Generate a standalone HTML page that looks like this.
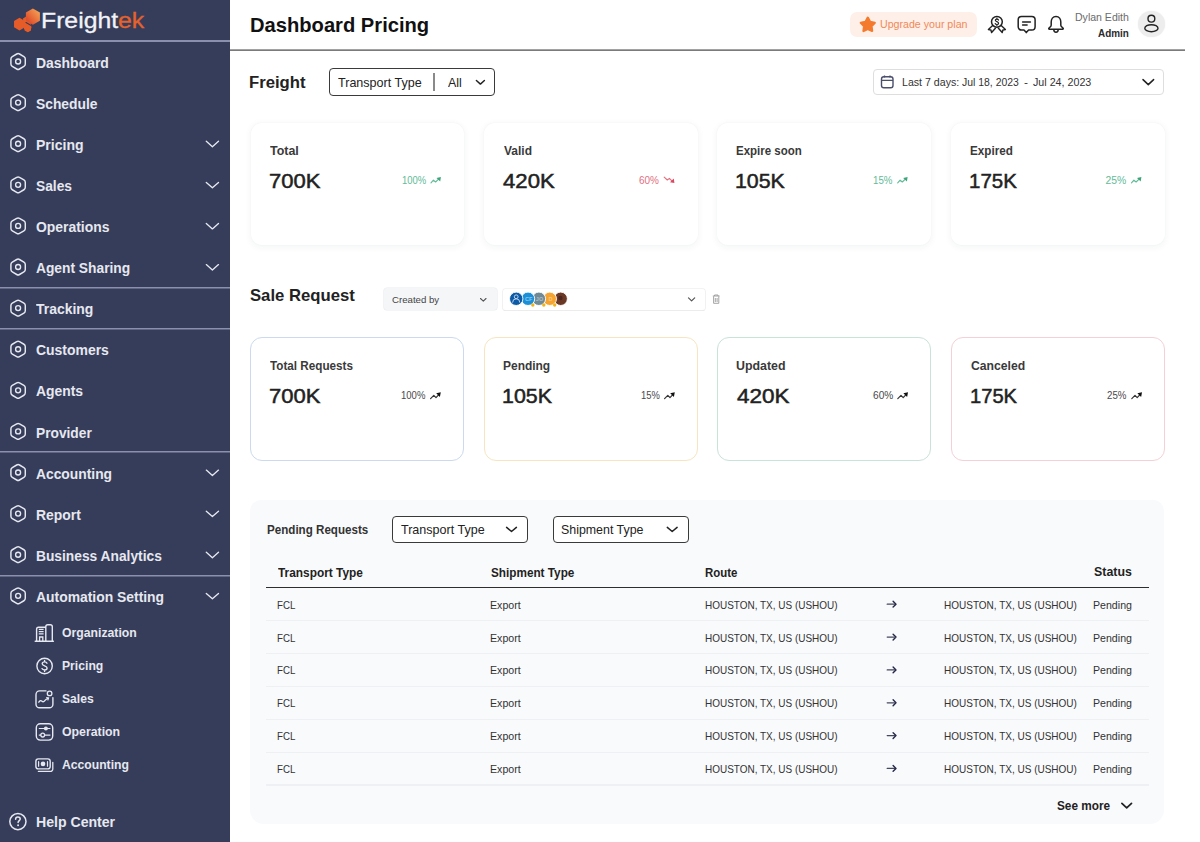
<!DOCTYPE html><html><head><meta charset="utf-8"><style>
html,body{margin:0;padding:0;width:1200px;height:842px;overflow:hidden;background:#fff;font-family:"Liberation Sans",sans-serif;}
.t{position:absolute;white-space:nowrap;line-height:1;}
svg{overflow:visible}
</style></head><body>
<div style="position:absolute;left:0px;top:0px;width:230px;height:842px;background:#363d5a"></div>
<svg style="position:absolute;left:0px;top:0px;" width="50" height="40" viewBox="0 0 50 40" fill="none"><defs><linearGradient id="lg" x1="0" y1="1" x2="1" y2="0"><stop offset="0.2" stop-color="#de4f2c"/><stop offset="0.95" stop-color="#f7a656"/></linearGradient></defs>
<path d="M19.50,30.40 L14.04,27.25 L14.04,20.95 L19.50,17.80 L24.96,20.95 L24.96,27.25 Z" fill="#e65c29"/>
<path d="M27.80,32.30 L24.60,30.45 L24.60,26.75 L27.80,24.90 L31.00,26.75 L31.00,30.45 Z" fill="#e65c29"/>
<path d="M23 18.5 L27 16 L31 24 L31.5 28 L28 32 L24 29 Z" fill="#e65c29"/>
<path d="M32.90,24.70 L25.89,20.65 L25.89,12.55 L32.90,8.50 L39.91,12.55 L39.91,20.65 Z" fill="url(#lg)"/>
<path d="M26 22.6 L31.2 25.6" stroke="#3b3a55" stroke-width="1.2" stroke-linecap="round"/></svg>
<div class="t" style="left:40.66px;top:10px;font-size:22.4px;color:#f2f3f7;transform:scaleX(1.1060);transform-origin:0 0;-webkit-text-stroke-width:0.3px">Freight<span style="color:#e5622c">ek</span></div>
<div style="position:absolute;left:0px;top:40px;width:230px;height:2px;background:#8a90ad"></div>
<div style="position:absolute;left:0px;top:287px;width:230px;height:1px;background:#8a90ad;box-shadow:0 1px 0 rgba(138,144,173,0.5)"></div>
<div style="position:absolute;left:0px;top:328px;width:230px;height:1px;background:#8a90ad;box-shadow:0 1px 0 rgba(138,144,173,0.5)"></div>
<div style="position:absolute;left:0px;top:451px;width:230px;height:1px;background:#8a90ad;box-shadow:0 1px 0 rgba(138,144,173,0.5)"></div>
<div style="position:absolute;left:0px;top:575px;width:230px;height:1px;background:#8a90ad;box-shadow:0 1px 0 rgba(138,144,173,0.5)"></div>
<div class="t" style="left:35.50px;top:56px;font-size:14px;color:#e6e8f0;font-weight:bold;transform:scaleX(0.9965);transform-origin:0 0;">Dashboard</div>
<div class="t" style="left:36.01px;top:97px;font-size:14px;color:#e6e8f0;font-weight:bold;transform:scaleX(0.9878);transform-origin:0 0;">Schedule</div>
<div class="t" style="left:35.50px;top:138px;font-size:14px;color:#e6e8f0;font-weight:bold;transform:scaleX(1.0022);transform-origin:0 0;">Pricing</div>
<div class="t" style="left:36.01px;top:179px;font-size:14px;color:#e6e8f0;font-weight:bold;transform:scaleX(0.9831);transform-origin:0 0;">Sales</div>
<div class="t" style="left:36.00px;top:220px;font-size:14px;color:#e6e8f0;font-weight:bold;transform:scaleX(0.9938);transform-origin:0 0;">Operations</div>
<div class="t" style="left:36.25px;top:261px;font-size:14px;color:#e6e8f0;font-weight:bold;transform:scaleX(0.9841);transform-origin:0 0;">Agent Sharing</div>
<div class="t" style="left:36.25px;top:302px;font-size:14px;color:#e6e8f0;font-weight:bold;transform:scaleX(0.9965);transform-origin:0 0;">Tracking</div>
<div class="t" style="left:36.00px;top:343px;font-size:14px;color:#e6e8f0;font-weight:bold;transform:scaleX(0.9958);transform-origin:0 0;">Customers</div>
<div class="t" style="left:36.25px;top:384px;font-size:14px;color:#e6e8f0;font-weight:bold;transform:scaleX(0.9925);transform-origin:0 0;">Agents</div>
<div class="t" style="left:35.52px;top:426px;font-size:14px;color:#e6e8f0;font-weight:bold;transform:scaleX(0.9812);transform-origin:0 0;">Provider</div>
<div class="t" style="left:36.25px;top:467px;font-size:14px;color:#e6e8f0;font-weight:bold;transform:scaleX(0.9875);transform-origin:0 0;">Accounting</div>
<div class="t" style="left:35.51px;top:508px;font-size:14px;color:#e6e8f0;font-weight:bold;transform:scaleX(0.9932);transform-origin:0 0;">Report</div>
<div class="t" style="left:35.52px;top:549px;font-size:14px;color:#e6e8f0;font-weight:bold;transform:scaleX(0.9838);transform-origin:0 0;">Business Analytics</div>
<div class="t" style="left:36.25px;top:590px;font-size:14px;color:#e6e8f0;font-weight:bold;transform:scaleX(0.9922);transform-origin:0 0;">Automation Setting</div>
<svg style="position:absolute;left:0px;top:0px;" width="230" height="842" viewBox="0 0 230 842" fill="none"><path d="M16.71 54.00 Q18.10 53.20 19.49 54.00 L23.90 56.55 Q25.29 57.35 25.29 58.95 L25.29 64.05 Q25.29 65.65 23.90 66.45 L19.49 69.00 Q18.10 69.80 16.71 69.00 L12.30 66.45 Q10.91 65.65 10.91 64.05 L10.91 58.95 Q10.91 57.35 12.30 56.55 Z" stroke="#e6e8f0" stroke-width="1.45"/><circle cx="18.1" cy="61.49999999999999" r="2.5" stroke="#e6e8f0" stroke-width="1.35"/><path d="M16.71 95.10 Q18.10 94.30 19.49 95.10 L23.90 97.65 Q25.29 98.45 25.29 100.05 L25.29 105.15 Q25.29 106.75 23.90 107.55 L19.49 110.10 Q18.10 110.90 16.71 110.10 L12.30 107.55 Q10.91 106.75 10.91 105.15 L10.91 100.05 Q10.91 98.45 12.30 97.65 Z" stroke="#e6e8f0" stroke-width="1.45"/><circle cx="18.1" cy="102.6" r="2.5" stroke="#e6e8f0" stroke-width="1.35"/><path d="M16.71 136.20 Q18.10 135.40 19.49 136.20 L23.90 138.75 Q25.29 139.55 25.29 141.15 L25.29 146.25 Q25.29 147.85 23.90 148.65 L19.49 151.20 Q18.10 152.00 16.71 151.20 L12.30 148.65 Q10.91 147.85 10.91 146.25 L10.91 141.15 Q10.91 139.55 12.30 138.75 Z" stroke="#e6e8f0" stroke-width="1.45"/><circle cx="18.1" cy="143.70000000000002" r="2.5" stroke="#e6e8f0" stroke-width="1.35"/><path d="M206.30 141.30 L212.40 146.70 L218.50 141.30" stroke="#e6e8f0" stroke-width="1.35" fill="none" stroke-linecap="round" stroke-linejoin="round"/><path d="M16.71 177.30 Q18.10 176.50 19.49 177.30 L23.90 179.85 Q25.29 180.65 25.29 182.25 L25.29 187.35 Q25.29 188.95 23.90 189.75 L19.49 192.30 Q18.10 193.10 16.71 192.30 L12.30 189.75 Q10.91 188.95 10.91 187.35 L10.91 182.25 Q10.91 180.65 12.30 179.85 Z" stroke="#e6e8f0" stroke-width="1.45"/><circle cx="18.1" cy="184.8" r="2.5" stroke="#e6e8f0" stroke-width="1.35"/><path d="M206.30 182.40 L212.40 187.80 L218.50 182.40" stroke="#e6e8f0" stroke-width="1.35" fill="none" stroke-linecap="round" stroke-linejoin="round"/><path d="M16.71 218.40 Q18.10 217.60 19.49 218.40 L23.90 220.95 Q25.29 221.75 25.29 223.35 L25.29 228.45 Q25.29 230.05 23.90 230.85 L19.49 233.40 Q18.10 234.20 16.71 233.40 L12.30 230.85 Q10.91 230.05 10.91 228.45 L10.91 223.35 Q10.91 221.75 12.30 220.95 Z" stroke="#e6e8f0" stroke-width="1.45"/><circle cx="18.1" cy="225.9" r="2.5" stroke="#e6e8f0" stroke-width="1.35"/><path d="M206.30 223.50 L212.40 228.90 L218.50 223.50" stroke="#e6e8f0" stroke-width="1.35" fill="none" stroke-linecap="round" stroke-linejoin="round"/><path d="M16.71 259.50 Q18.10 258.70 19.49 259.50 L23.90 262.05 Q25.29 262.85 25.29 264.45 L25.29 269.55 Q25.29 271.15 23.90 271.95 L19.49 274.50 Q18.10 275.30 16.71 274.50 L12.30 271.95 Q10.91 271.15 10.91 269.55 L10.91 264.45 Q10.91 262.85 12.30 262.05 Z" stroke="#e6e8f0" stroke-width="1.45"/><circle cx="18.1" cy="267.0" r="2.5" stroke="#e6e8f0" stroke-width="1.35"/><path d="M206.30 264.60 L212.40 270.00 L218.50 264.60" stroke="#e6e8f0" stroke-width="1.35" fill="none" stroke-linecap="round" stroke-linejoin="round"/><path d="M16.71 300.60 Q18.10 299.80 19.49 300.60 L23.90 303.15 Q25.29 303.95 25.29 305.55 L25.29 310.65 Q25.29 312.25 23.90 313.05 L19.49 315.60 Q18.10 316.40 16.71 315.60 L12.30 313.05 Q10.91 312.25 10.91 310.65 L10.91 305.55 Q10.91 303.95 12.30 303.15 Z" stroke="#e6e8f0" stroke-width="1.45"/><circle cx="18.1" cy="308.1" r="2.5" stroke="#e6e8f0" stroke-width="1.35"/><path d="M16.71 341.70 Q18.10 340.90 19.49 341.70 L23.90 344.25 Q25.29 345.05 25.29 346.65 L25.29 351.75 Q25.29 353.35 23.90 354.15 L19.49 356.70 Q18.10 357.50 16.71 356.70 L12.30 354.15 Q10.91 353.35 10.91 351.75 L10.91 346.65 Q10.91 345.05 12.30 344.25 Z" stroke="#e6e8f0" stroke-width="1.45"/><circle cx="18.1" cy="349.19999999999993" r="2.5" stroke="#e6e8f0" stroke-width="1.35"/><path d="M16.71 382.80 Q18.10 382.00 19.49 382.80 L23.90 385.35 Q25.29 386.15 25.29 387.75 L25.29 392.85 Q25.29 394.45 23.90 395.25 L19.49 397.80 Q18.10 398.60 16.71 397.80 L12.30 395.25 Q10.91 394.45 10.91 392.85 L10.91 387.75 Q10.91 386.15 12.30 385.35 Z" stroke="#e6e8f0" stroke-width="1.45"/><circle cx="18.1" cy="390.29999999999995" r="2.5" stroke="#e6e8f0" stroke-width="1.35"/><path d="M16.71 423.90 Q18.10 423.10 19.49 423.90 L23.90 426.45 Q25.29 427.25 25.29 428.85 L25.29 433.95 Q25.29 435.55 23.90 436.35 L19.49 438.90 Q18.10 439.70 16.71 438.90 L12.30 436.35 Q10.91 435.55 10.91 433.95 L10.91 428.85 Q10.91 427.25 12.30 426.45 Z" stroke="#e6e8f0" stroke-width="1.45"/><circle cx="18.1" cy="431.4" r="2.5" stroke="#e6e8f0" stroke-width="1.35"/><path d="M16.71 465.00 Q18.10 464.20 19.49 465.00 L23.90 467.55 Q25.29 468.35 25.29 469.95 L25.29 475.05 Q25.29 476.65 23.90 477.45 L19.49 480.00 Q18.10 480.80 16.71 480.00 L12.30 477.45 Q10.91 476.65 10.91 475.05 L10.91 469.95 Q10.91 468.35 12.30 467.55 Z" stroke="#e6e8f0" stroke-width="1.45"/><circle cx="18.1" cy="472.5" r="2.5" stroke="#e6e8f0" stroke-width="1.35"/><path d="M206.30 470.10 L212.40 475.50 L218.50 470.10" stroke="#e6e8f0" stroke-width="1.35" fill="none" stroke-linecap="round" stroke-linejoin="round"/><path d="M16.71 506.10 Q18.10 505.30 19.49 506.10 L23.90 508.65 Q25.29 509.45 25.29 511.05 L25.29 516.15 Q25.29 517.75 23.90 518.55 L19.49 521.10 Q18.10 521.90 16.71 521.10 L12.30 518.55 Q10.91 517.75 10.91 516.15 L10.91 511.05 Q10.91 509.45 12.30 508.65 Z" stroke="#e6e8f0" stroke-width="1.45"/><circle cx="18.1" cy="513.6" r="2.5" stroke="#e6e8f0" stroke-width="1.35"/><path d="M206.30 511.20 L212.40 516.60 L218.50 511.20" stroke="#e6e8f0" stroke-width="1.35" fill="none" stroke-linecap="round" stroke-linejoin="round"/><path d="M16.71 547.20 Q18.10 546.40 19.49 547.20 L23.90 549.75 Q25.29 550.55 25.29 552.15 L25.29 557.25 Q25.29 558.85 23.90 559.65 L19.49 562.20 Q18.10 563.00 16.71 562.20 L12.30 559.65 Q10.91 558.85 10.91 557.25 L10.91 552.15 Q10.91 550.55 12.30 549.75 Z" stroke="#e6e8f0" stroke-width="1.45"/><circle cx="18.1" cy="554.7" r="2.5" stroke="#e6e8f0" stroke-width="1.35"/><path d="M206.30 552.30 L212.40 557.70 L218.50 552.30" stroke="#e6e8f0" stroke-width="1.35" fill="none" stroke-linecap="round" stroke-linejoin="round"/><path d="M16.71 588.30 Q18.10 587.50 19.49 588.30 L23.90 590.85 Q25.29 591.65 25.29 593.25 L25.29 598.35 Q25.29 599.95 23.90 600.75 L19.49 603.30 Q18.10 604.10 16.71 603.30 L12.30 600.75 Q10.91 599.95 10.91 598.35 L10.91 593.25 Q10.91 591.65 12.30 590.85 Z" stroke="#e6e8f0" stroke-width="1.45"/><circle cx="18.1" cy="595.8000000000001" r="2.5" stroke="#e6e8f0" stroke-width="1.35"/><path d="M206.30 593.40 L212.40 598.80 L218.50 593.40" stroke="#e6e8f0" stroke-width="1.35" fill="none" stroke-linecap="round" stroke-linejoin="round"/></svg>
<div class="t" style="left:62.09px;top:627px;font-size:12px;color:#e6e8f0;font-weight:bold;transform:scaleX(1.0187);transform-origin:0 0;">Organization</div>
<div class="t" style="left:61.84px;top:660px;font-size:12px;color:#e6e8f0;font-weight:bold;transform:scaleX(1.0140);transform-origin:0 0;">Pricing</div>
<div class="t" style="left:62.10px;top:693px;font-size:12px;color:#e6e8f0;font-weight:bold;transform:scaleX(1.0098);transform-origin:0 0;">Sales</div>
<div class="t" style="left:62.09px;top:726px;font-size:12px;color:#e6e8f0;font-weight:bold;transform:scaleX(1.0252);transform-origin:0 0;">Operation</div>
<div class="t" style="left:62.35px;top:759px;font-size:12px;color:#e6e8f0;font-weight:bold;transform:scaleX(1.0138);transform-origin:0 0;">Accounting</div>
<svg style="position:absolute;left:0px;top:0px;" width="230" height="842" viewBox="0 0 230 842" fill="none"><path d="M36.6 641.3 V629.2 a2 2 0 0 1 2 -2 H45.8 V641.3 M45.8 627.2 V626.8 a2 2 0 0 1 2 -2 H50.3 a2 2 0 0 1 2 2 V641.3 M35.2 641.3 H53.4" stroke="#e6e8f0" stroke-width="1.4" stroke-linejoin="round" stroke-linecap="round"/><path d="M38.8 629.4 H43.6 M38.8 631.6 H43.6 M38.8 633.8 H43.6 M39.6 641 V637 H42.8 V641" stroke="#e6e8f0" stroke-width="1.3"/><circle cx="44.6" cy="666" r="7.7" stroke="#e6e8f0" stroke-width="1.4"/><path d="M47 663.2 C46.6 662.3 45.8 661.9 44.6 661.9 C43.1 661.9 42.2 662.7 42.2 663.8 C42.2 666.3 47.1 665.3 47.1 668 C47.1 669.2 46 670 44.6 670 C43.3 670 42.4 669.5 42 668.6 M44.6 660.5 V661.9 M44.6 670 V671.5" stroke="#e6e8f0" stroke-width="1.35" stroke-linecap="round"/><path d="M46 690.9 H39.6 a3.6 3.6 0 0 0 -3.6 3.6 V704.2 a3.6 3.6 0 0 0 3.6 3.6 H49.3 a3.6 3.6 0 0 0 3.6 -3.6 V697.6" stroke="#e6e8f0" stroke-width="1.4" stroke-linecap="round"/><circle cx="49.6" cy="693.4" r="2.3" stroke="#e6e8f0" stroke-width="1.3"/><path d="M38.8 702.2 C40 700.4 41 700.2 42 701.2 C43 702.2 44 701.8 45 700.4 C45.8 699.3 46.6 698.8 48.2 698.3" stroke="#e6e8f0" stroke-width="1.3" stroke-linecap="round"/><path d="M46.6 697.6 L48.6 698 L47.9 700" stroke="#e6e8f0" stroke-width="1.1" stroke-linecap="round"/><rect x="36.3" y="723.7" width="16.4" height="16.4" rx="4" stroke="#e6e8f0" stroke-width="1.4"/><path d="M38.8 728.5 H50.4 M38.8 735.1 H50.4" stroke="#e6e8f0" stroke-width="1.2"/><circle cx="45.9" cy="728.5" r="2" fill="#e6e8f0"/><circle cx="42.7" cy="735.1" r="1.9" fill="#363d5a" stroke="#e6e8f0" stroke-width="1.3"/><path d="M38.4 771.4 H50.3 a2.5 2.5 0 0 0 2.5 -2.5 V762.3" stroke="#e6e8f0" stroke-width="1.3" stroke-linecap="round"/><rect x="35.9" y="758.9" width="14.3" height="10" rx="2.4" stroke="#e6e8f0" stroke-width="1.4"/><circle cx="43" cy="763.9" r="2.3" fill="#e6e8f0"/><path d="M38.6 761.7 V766.2 M47.5 761.7 V766.2" stroke="#e6e8f0" stroke-width="1.2" stroke-linecap="round"/></svg>
<div class="t" style="left:35.99px;top:815px;font-size:14px;color:#e6e8f0;font-weight:bold;transform:scaleX(1.0065);transform-origin:0 0;">Help Center</div>
<svg style="position:absolute;left:0px;top:0px;" width="40" height="842" viewBox="0 0 40 842" fill="none"><circle cx="17.9" cy="821.6" r="8.1" stroke="#e6e8f0" stroke-width="1.5"/><path d="M15.6 819.3 C15.6 817.9 16.6 817.1 17.9 817.1 C19.2 817.1 20.2 817.9 20.2 819.1 C20.2 820.6 18.1 820.8 18.1 822.6" stroke="#e6e8f0" stroke-width="1.5" stroke-linecap="round"/><circle cx="18.1" cy="825.2" r="0.95" fill="#e6e8f0"/></svg>
<div class="t" style="left:249.57px;top:15px;font-size:20.5px;color:#111;font-weight:bold;transform:scaleX(0.9830);transform-origin:0 0;">Dashboard Pricing</div>
<div style="position:absolute;left:230px;top:49px;width:955px;height:1px;background:#a2a2a2;box-shadow:0 1px 0 #7b7b7b"></div>
<div style="position:absolute;left:850px;top:12.3px;width:127.3px;height:24.7px;background:#fef0e8;border-radius:7px"></div>
<svg style="position:absolute;left:0px;top:0px;" width="1200" height="60" viewBox="0 0 1200 60" fill="none"><path d="M867.80,17.60 L870.09,21.84 L874.84,22.71 L871.51,26.21 L872.15,30.99 L867.80,28.90 L863.45,30.99 L864.09,26.21 L860.76,22.71 L865.51,21.84 Z" fill="#f47a2d" stroke="#f47a2d" stroke-width="2.2" stroke-linejoin="round"/></svg>
<div class="t" style="left:879.99px;top:19px;font-size:11.2px;color:#f0895a;transform:scaleX(0.9503);transform-origin:0 0;">Upgrade your plan</div>
<svg style="position:absolute;left:0px;top:0px;" width="1200" height="60" viewBox="0 0 1200 60" fill="none"><circle cx="996.9" cy="21.8" r="5.4" stroke="#222" stroke-width="1.5"/><path d="M998.5 20.1 C998.2 19.4 997.7 19.1 996.9 19.1 C995.9 19.1 995.3 19.6 995.3 20.3 C995.3 21.9 998.6 21.4 998.6 23.2 C998.6 24 997.9 24.5 996.9 24.5 C996 24.5 995.4 24.1 995.2 23.5 M996.9 18.1 V19.1 M996.9 24.5 V25.4" stroke="#222" stroke-width="1.15" stroke-linecap="round"/><path d="M992.6 25.6 L988.4 29.5 L990.9 30 L991.6 32.5 L995.4 28.3 M1001.2 25.6 L1005.4 29.5 L1002.9 30 L1002.2 32.5 L998.4 28.3" stroke="#222" stroke-width="1.4" stroke-linejoin="round" stroke-linecap="round"/><path d="M1021.5 16.5 H1031.8 a3.3 3.3 0 0 1 3.3 3.3 V26.8 a3.3 3.3 0 0 1 -3.3 3.3 H1028.6 L1026.3 32.6 L1024 30.1 H1021.5 a3.3 3.3 0 0 1 -3.3 -3.3 V19.8 a3.3 3.3 0 0 1 3.3 -3.3 Z" stroke="#222" stroke-width="1.5" stroke-linejoin="round"/><path d="M1022.6 22.1 H1030.4 M1022.6 25 H1027.1" stroke="#222" stroke-width="1.5" stroke-linecap="round"/><path d="M1056 16.5 C1052.8 16.5 1051.2 19.2 1051.2 22 V25.3 C1051.2 26.8 1049.8 27.4 1049 28 C1048.5 28.5 1048.7 29.2 1049.4 29.2 H1062.6 C1063.3 29.2 1063.5 28.5 1063 28 C1062.2 27.4 1060.8 26.8 1060.8 25.3 V22 C1060.8 19.2 1059.2 16.5 1056 16.5 Z" stroke="#222" stroke-width="1.5" stroke-linejoin="round"/><path d="M1053.8 29.6 a2.2 2.6 0 0 0 4.4 0" stroke="#222" stroke-width="1.5"/></svg>
<div class="t" style="left:1074.84px;top:12px;font-size:11px;color:#6b6b6b;transform:scaleX(0.9578);transform-origin:0 0;">Dylan Edith</div>
<div class="t" style="left:1097.77px;top:28px;font-size:10.8px;color:#2b2b2b;font-weight:bold;transform:scaleX(0.9160);transform-origin:0 0;">Admin</div>
<div style="position:absolute;left:1138.2px;top:11px;width:26.4px;height:26.4px;background:#ededed;border-radius:50%;box-shadow:0 0 1.5px #ededed"></div>
<svg style="position:absolute;left:0px;top:0px;" width="1200" height="60" viewBox="0 0 1200 60" fill="none"><circle cx="1151.4" cy="18.7" r="3.4" stroke="#222" stroke-width="1.4"/><ellipse cx="1151.4" cy="28.2" rx="6.6" ry="3.5" stroke="#222" stroke-width="1.4"/></svg>
<div class="t" style="left:249.43px;top:74px;font-size:17.2px;color:#222;font-weight:bold;transform:scaleX(0.9702);transform-origin:0 0;">Freight</div>
<div style="position:absolute;left:329px;top:68px;width:164px;height:26px;border:1px solid #3a3a3a;border-radius:4px;box-sizing:content-box"></div>
<div class="t" style="left:337.95px;top:77px;font-size:12.4px;color:#222;transform:scaleX(1.0128);transform-origin:0 0;">Transport Type</div>
<div style="position:absolute;left:433.4px;top:73.2px;width:1.5px;height:18px;background:#8a8a8a"></div>
<div class="t" style="left:447.60px;top:77px;font-size:12.2px;color:#222;transform:scaleX(1.0196);transform-origin:0 0;">All</div>
<svg style="position:absolute;left:0px;top:0px;" width="1200" height="120" viewBox="0 0 1200 120" fill="none"><path d="M476.4 80.5 L480.4 84.1 L484.4 80.5" stroke="#222" stroke-width="1.45" stroke-linecap="round" stroke-linejoin="round"/></svg>
<div style="position:absolute;left:873px;top:69px;width:289px;height:24px;border:1px solid #dedede;border-radius:4px;box-sizing:content-box"></div>
<svg style="position:absolute;left:0px;top:0px;" width="1200" height="120" viewBox="0 0 1200 120" fill="none"><rect x="881.5" y="76.7" width="11.5" height="11" rx="2.3" stroke="#4a4f6c" stroke-width="1.4"/><path d="M881.5 80.3 H893 M884.5 75.5 V77.5 M890 75.5 V77.5" stroke="#4a4f6c" stroke-width="1.3"/><path d="M1143 79.6 L1148.3 84.6 L1153.6 79.6" stroke="#222" stroke-width="1.5" stroke-linecap="round" stroke-linejoin="round"/></svg>
<div class="t" style="left:901.97px;top:77px;font-size:10.9px;color:#333;transform:scaleX(0.9737);transform-origin:0 0;">Last 7 days:</div>
<div class="t" style="left:962.26px;top:77px;font-size:10.9px;color:#333;transform:scaleX(0.9583);transform-origin:0 0;">Jul 18, 2023</div>
<div class="t" style="left:1024.05px;top:77px;font-size:10.9px;color:#333;transform:scaleX(1.0909);transform-origin:0 0;">-</div>
<div class="t" style="left:1033.15px;top:77px;font-size:10.9px;color:#333;transform:scaleX(0.9821);transform-origin:0 0;">Jul 24, 2023</div>
<div style="position:absolute;left:250.5px;top:123px;width:213.5px;height:121.5px;background:#fff;border-radius:11px;box-shadow:0 1.5px 6px 1px rgba(30,40,70,0.045),0 0 2px rgba(30,40,70,0.04)"></div>
<div style="position:absolute;left:484px;top:123px;width:213.5px;height:121.5px;background:#fff;border-radius:11px;box-shadow:0 1.5px 6px 1px rgba(30,40,70,0.045),0 0 2px rgba(30,40,70,0.04)"></div>
<div style="position:absolute;left:717.2px;top:123px;width:213.5px;height:121.5px;background:#fff;border-radius:11px;box-shadow:0 1.5px 6px 1px rgba(30,40,70,0.045),0 0 2px rgba(30,40,70,0.04)"></div>
<div style="position:absolute;left:951px;top:123px;width:213.5px;height:121.5px;background:#fff;border-radius:11px;box-shadow:0 1.5px 6px 1px rgba(30,40,70,0.045),0 0 2px rgba(30,40,70,0.04)"></div>
<div class="t" style="left:270.10px;top:145px;font-size:12px;color:#3a3a3a;font-weight:bold;transform:scaleX(1.0370);transform-origin:0 0;">Total</div>
<div class="t" style="left:269.03px;top:171px;font-size:20.6px;color:#222;transform:scaleX(1.0695);transform-origin:0 0;-webkit-text-stroke:0.5px #222">700K</div>
<div class="t" style="left:401.62px;top:176px;font-size:10.4px;color:#62bb98;transform:scaleX(0.9098);transform-origin:0 0;">100%</div>
<div class="t" style="left:503.60px;top:145px;font-size:12px;color:#3a3a3a;font-weight:bold;transform:scaleX(0.9982);transform-origin:0 0;">Valid</div>
<div class="t" style="left:503.06px;top:171px;font-size:20.6px;color:#222;transform:scaleX(1.0751);transform-origin:0 0;-webkit-text-stroke:0.5px #222">420K</div>
<div class="t" style="left:639.32px;top:176px;font-size:10.4px;color:#e2707f;transform:scaleX(0.9600);transform-origin:0 0;">60%</div>
<div class="t" style="left:736.08px;top:145px;font-size:12px;color:#3a3a3a;font-weight:bold;transform:scaleX(0.9576);transform-origin:0 0;">Expire soon</div>
<div class="t" style="left:735.25px;top:171px;font-size:20.6px;color:#222;transform:scaleX(1.0357);transform-origin:0 0;-webkit-text-stroke:0.5px #222">105K</div>
<div class="t" style="left:873.10px;top:176px;font-size:10.4px;color:#62bb98;transform:scaleX(0.9316);transform-origin:0 0;">15%</div>
<div class="t" style="left:969.87px;top:145px;font-size:12px;color:#3a3a3a;font-weight:bold;transform:scaleX(0.9741);transform-origin:0 0;">Expired</div>
<div class="t" style="left:969.11px;top:171px;font-size:20.6px;color:#222;transform:scaleX(0.9946);transform-origin:0 0;-webkit-text-stroke:0.5px #222">175K</div>
<div class="t" style="left:1105.50px;top:176px;font-size:10.4px;color:#62bb98;transform:scaleX(1.0000);transform-origin:0 0;">25%</div>
<svg style="position:absolute;left:0px;top:0px;" width="1200" height="260" viewBox="0 0 1200 260" fill="none"><path d="M431.0 182.8 L433.4 180.2 L435.6 182 L438.6 179.2" stroke="#62bb98" stroke-width="1.15" stroke-linecap="round" stroke-linejoin="round"/><path d="M440.9 177.1 L436.5 177.9 L440.2 181.5 Z" fill="#3ba57a"/><path d="M664.2 177.1 L667.3 180 L669.4 178.4 L671.9 180.8" stroke="#e2707f" stroke-width="1.15" stroke-linecap="round" stroke-linejoin="round"/><path d="M674.4 182.9 L670.0 182.3 L673.8 178.6 Z" fill="#d84a63"/><path d="M897.7 182.8 L900.1 180.2 L902.3000000000001 182 L905.3000000000001 179.2" stroke="#62bb98" stroke-width="1.15" stroke-linecap="round" stroke-linejoin="round"/><path d="M907.6 177.1 L903.2 177.9 L906.9000000000001 181.5 Z" fill="#3ba57a"/><path d="M1131.5 182.8 L1133.9 180.2 L1136.1 182 L1139.1 179.2" stroke="#62bb98" stroke-width="1.15" stroke-linecap="round" stroke-linejoin="round"/><path d="M1141.4 177.1 L1137.0 177.9 L1140.7 181.5 Z" fill="#3ba57a"/></svg>
<div class="t" style="left:249.91px;top:287px;font-size:17px;color:#222;font-weight:bold;transform:scaleX(0.9811);transform-origin:0 0;">Sale Request</div>
<div style="position:absolute;left:383.5px;top:288.4px;width:113.9px;height:21.2px;background:#f5f6f8;box-shadow:0 0 0 0.6px #e9ebee;border-radius:3px"></div>
<div class="t" style="left:391.80px;top:295px;font-size:9.6px;color:#444;transform:scaleX(1.0043);transform-origin:0 0;">Created by</div>
<div style="position:absolute;left:503px;top:289.4px;width:202px;height:20.2px;background:#fff;box-shadow:0 0 0 0.7px #efefef, 0 0.6px 0 0.4px #e0e0e0;border-radius:2.5px"></div>
<svg style="position:absolute;left:0px;top:0px;" width="1200" height="320" viewBox="0 0 1200 320" fill="none"><path d="M480.5 298.5 L483.3 301.2 L486 298.5" stroke="#555" stroke-width="1.1" stroke-linecap="round" stroke-linejoin="round"/><path d="M688.5 297.8 L691.6 300.9 L694.7 297.8" stroke="#555" stroke-width="1.2" stroke-linecap="round" stroke-linejoin="round"/><circle cx="560.7" cy="298.8" r="6.7" fill="#6b3826" stroke="#fff" stroke-width="0.9"/><circle cx="549.8" cy="298.8" r="6.7" fill="#f5a431" stroke="#fff" stroke-width="0.9"/><circle cx="538.9" cy="298.8" r="6.7" fill="#6f8995" stroke="#fff" stroke-width="0.9"/><circle cx="528" cy="298.8" r="6.7" fill="#1b8fd7" stroke="#fff" stroke-width="0.9"/><circle cx="516.2" cy="298.8" r="6.7" fill="#0d5aa6" stroke="#fff" stroke-width="0.9"/><circle cx="560.4" cy="298" r="2.2" fill="#3e1f18" opacity="0.7"/><text x="528.6" y="301" font-family="Liberation Sans" font-size="5.5" font-weight="bold" fill="#d6ecfa" opacity="0.6" text-anchor="middle">CF</text><text x="539.5" y="301" font-family="Liberation Sans" font-size="5.5" font-weight="bold" fill="#d8e0e4" opacity="0.6" text-anchor="middle">JO</text><text x="550.4" y="301" font-family="Liberation Sans" font-size="5.5" font-weight="bold" fill="#fde3b5" opacity="0.6" text-anchor="middle">D</text><circle cx="516.2" cy="296.8" r="1.9" stroke="#cfe0f2" stroke-width="0.9"/><path d="M512.6 302.6 a3.6 3.8 0 0 1 7.2 0" stroke="#cfe0f2" stroke-width="0.9"/><circle cx="532.8" cy="305" r="1.7" fill="#f0b318"/><circle cx="543.8" cy="305" r="1.7" fill="#f0b318"/><circle cx="554.7" cy="305" r="1.7" fill="#f0b318"/><path d="M712.8 296 H719.6 M714.5 296 V295 H718 V296 M713.6 296.3 V303.3 H718.8 V296.3 M715.3 298 V302 M717.1 298 V302" stroke="#9a9a9a" stroke-width="0.9"/></svg>
<div style="position:absolute;left:250px;top:337px;width:211.6px;height:121.5px;border:1px solid #cbdaee;border-radius:12px;box-sizing:content-box;background:#fff"></div>
<div class="t" style="left:270.00px;top:360px;font-size:12px;color:#3a3a3a;font-weight:bold;transform:scaleX(0.9746);transform-origin:0 0;">Total Requests</div>
<div class="t" style="left:268.93px;top:386px;font-size:20.6px;color:#222;transform:scaleX(1.0695);transform-origin:0 0;-webkit-text-stroke:0.5px #222">700K</div>
<div class="t" style="left:401.43px;top:390px;font-size:10.6px;color:#4a4a4a;transform:scaleX(0.9000);transform-origin:0 0;">100%</div>
<div style="position:absolute;left:484px;top:337px;width:211.6px;height:121.5px;border:1px solid #f7e5c0;border-radius:12px;box-sizing:content-box;background:#fff"></div>
<div class="t" style="left:503.25px;top:360px;font-size:12px;color:#3a3a3a;font-weight:bold;transform:scaleX(0.9967);transform-origin:0 0;">Pending</div>
<div class="t" style="left:502.44px;top:386px;font-size:20.6px;color:#222;transform:scaleX(1.0378);transform-origin:0 0;-webkit-text-stroke:0.5px #222">105K</div>
<div class="t" style="left:640.83px;top:390px;font-size:10.6px;color:#4a4a4a;transform:scaleX(0.8889);transform-origin:0 0;">15%</div>
<div style="position:absolute;left:717.2px;top:337px;width:211.6px;height:121.5px;border:1px solid #c8e3d7;border-radius:12px;box-sizing:content-box;background:#fff"></div>
<div class="t" style="left:736.43px;top:360px;font-size:12px;color:#3a3a3a;font-weight:bold;transform:scaleX(1.0323);transform-origin:0 0;">Updated</div>
<div class="t" style="left:736.65px;top:386px;font-size:20.6px;color:#222;transform:scaleX(1.0921);transform-origin:0 0;-webkit-text-stroke:0.5px #222">420K</div>
<div class="t" style="left:872.62px;top:390px;font-size:10.6px;color:#4a4a4a;transform:scaleX(0.9561);transform-origin:0 0;">60%</div>
<div style="position:absolute;left:951.2px;top:337px;width:211.6px;height:121.5px;border:1px solid #f5d0d6;border-radius:12px;box-sizing:content-box;background:#fff"></div>
<div class="t" style="left:970.69px;top:360px;font-size:12px;color:#3a3a3a;font-weight:bold;transform:scaleX(1.0154);transform-origin:0 0;">Canceled</div>
<div class="t" style="left:969.73px;top:386px;font-size:20.6px;color:#222;transform:scaleX(0.9773);transform-origin:0 0;-webkit-text-stroke:0.5px #222">175K</div>
<div class="t" style="left:1107.44px;top:390px;font-size:10.6px;color:#4a4a4a;transform:scaleX(0.9171);transform-origin:0 0;">25%</div>
<svg style="position:absolute;left:0px;top:0px;" width="1200" height="480" viewBox="0 0 1200 480" fill="none"><path d="M430.6 398.6 L433.8 395.4 L436.0 397.6 L438.8 394.6" stroke="#333" stroke-width="1.2" stroke-linecap="round" stroke-linejoin="round"/><path d="M440.8 392.2 L436.20000000000005 393.2 L439.90000000000003 396.9 Z" fill="#111"/><path d="M664.6 398.6 L667.8000000000001 395.4 L670.0 397.6 L672.8000000000001 394.6" stroke="#333" stroke-width="1.2" stroke-linecap="round" stroke-linejoin="round"/><path d="M674.8000000000001 392.2 L670.2 393.2 L673.9 396.9 Z" fill="#111"/><path d="M897.8000000000001 398.6 L901.0000000000001 395.4 L903.2 397.6 L906.0000000000001 394.6" stroke="#333" stroke-width="1.2" stroke-linecap="round" stroke-linejoin="round"/><path d="M908.0000000000001 392.2 L903.4000000000001 393.2 L907.1 396.9 Z" fill="#111"/><path d="M1131.8 398.6 L1135.0 395.4 L1137.2 397.6 L1140.0 394.6" stroke="#333" stroke-width="1.2" stroke-linecap="round" stroke-linejoin="round"/><path d="M1142.0 392.2 L1137.3999999999999 393.2 L1141.1 396.9 Z" fill="#111"/></svg>
<div style="position:absolute;left:250.3px;top:500px;width:913.7px;height:324px;background:#f9fafc;border-radius:11px 11px 14px 14px"></div>
<div class="t" style="left:266.59px;top:524px;font-size:12.2px;color:#333;font-weight:bold;transform:scaleX(0.9524);transform-origin:0 0;">Pending Requests</div>
<div style="position:absolute;left:392.2px;top:515.8px;width:134px;height:25.2px;background:#fff;border:1px solid #3a3a3a;border-radius:4px;box-sizing:content-box"></div>
<div style="position:absolute;left:553px;top:515.8px;width:134px;height:25.2px;background:#fff;border:1px solid #3a3a3a;border-radius:4px;box-sizing:content-box"></div>
<div class="t" style="left:401.25px;top:524px;font-size:12.4px;color:#222;transform:scaleX(1.0116);transform-origin:0 0;">Transport Type</div>
<div class="t" style="left:561.00px;top:524px;font-size:12.4px;color:#222;transform:scaleX(1.0000);transform-origin:0 0;">Shipment Type</div>
<div class="t" style="left:277.80px;top:567px;font-size:12.6px;color:#222;font-weight:bold;transform:scaleX(0.9426);transform-origin:0 0;">Transport Type</div>
<div class="t" style="left:490.97px;top:567px;font-size:12.6px;color:#222;font-weight:bold;transform:scaleX(0.9330);transform-origin:0 0;">Shipment Type</div>
<div class="t" style="left:704.72px;top:567px;font-size:12.6px;color:#222;font-weight:bold;transform:scaleX(0.9072);transform-origin:0 0;">Route</div>
<div class="t" style="left:1093.75px;top:566px;font-size:12.6px;color:#222;font-weight:bold;transform:scaleX(0.9828);transform-origin:0 0;">Status</div>
<div style="position:absolute;left:266px;top:587px;width:882.5px;height:1.3px;background:#2e2e2e"></div>
<div class="t" style="left:277.13px;top:600px;font-size:10.9px;color:#333;transform:scaleX(0.8923);transform-origin:0 0;">FCL</div>
<div class="t" style="left:490.47px;top:600px;font-size:10.9px;color:#333;transform:scaleX(0.9756);transform-origin:0 0;">Export</div>
<div class="t" style="left:704.71px;top:600px;font-size:10.9px;color:#333;transform:scaleX(0.9150);transform-origin:0 0;">HOUSTON, TX, US (USHOU)</div>
<div class="t" style="left:944.31px;top:600px;font-size:10.9px;color:#333;transform:scaleX(0.9178);transform-origin:0 0;">HOUSTON, TX, US (USHOU)</div>
<div class="t" style="left:1093.27px;top:600px;font-size:10.9px;color:#333;transform:scaleX(0.9740);transform-origin:0 0;">Pending</div>
<div style="position:absolute;left:266px;top:620.1px;width:882.5px;height:1.2px;background:#eff0f3"></div>
<div class="t" style="left:277.13px;top:633px;font-size:10.9px;color:#333;transform:scaleX(0.8923);transform-origin:0 0;">FCL</div>
<div class="t" style="left:490.47px;top:633px;font-size:10.9px;color:#333;transform:scaleX(0.9756);transform-origin:0 0;">Export</div>
<div class="t" style="left:704.71px;top:633px;font-size:10.9px;color:#333;transform:scaleX(0.9150);transform-origin:0 0;">HOUSTON, TX, US (USHOU)</div>
<div class="t" style="left:944.31px;top:633px;font-size:10.9px;color:#333;transform:scaleX(0.9178);transform-origin:0 0;">HOUSTON, TX, US (USHOU)</div>
<div class="t" style="left:1093.27px;top:633px;font-size:10.9px;color:#333;transform:scaleX(0.9740);transform-origin:0 0;">Pending</div>
<div style="position:absolute;left:266px;top:652.95px;width:882.5px;height:1.2px;background:#eff0f3"></div>
<div class="t" style="left:277.13px;top:665px;font-size:10.9px;color:#333;transform:scaleX(0.8923);transform-origin:0 0;">FCL</div>
<div class="t" style="left:490.47px;top:665px;font-size:10.9px;color:#333;transform:scaleX(0.9756);transform-origin:0 0;">Export</div>
<div class="t" style="left:704.71px;top:665px;font-size:10.9px;color:#333;transform:scaleX(0.9150);transform-origin:0 0;">HOUSTON, TX, US (USHOU)</div>
<div class="t" style="left:944.31px;top:665px;font-size:10.9px;color:#333;transform:scaleX(0.9178);transform-origin:0 0;">HOUSTON, TX, US (USHOU)</div>
<div class="t" style="left:1093.27px;top:665px;font-size:10.9px;color:#333;transform:scaleX(0.9740);transform-origin:0 0;">Pending</div>
<div style="position:absolute;left:266px;top:685.8000000000001px;width:882.5px;height:1.2px;background:#eff0f3"></div>
<div class="t" style="left:277.13px;top:698px;font-size:10.9px;color:#333;transform:scaleX(0.8923);transform-origin:0 0;">FCL</div>
<div class="t" style="left:490.47px;top:698px;font-size:10.9px;color:#333;transform:scaleX(0.9756);transform-origin:0 0;">Export</div>
<div class="t" style="left:704.71px;top:698px;font-size:10.9px;color:#333;transform:scaleX(0.9150);transform-origin:0 0;">HOUSTON, TX, US (USHOU)</div>
<div class="t" style="left:944.31px;top:698px;font-size:10.9px;color:#333;transform:scaleX(0.9178);transform-origin:0 0;">HOUSTON, TX, US (USHOU)</div>
<div class="t" style="left:1093.27px;top:698px;font-size:10.9px;color:#333;transform:scaleX(0.9740);transform-origin:0 0;">Pending</div>
<div style="position:absolute;left:266px;top:718.65px;width:882.5px;height:1.2px;background:#eff0f3"></div>
<div class="t" style="left:277.13px;top:731px;font-size:10.9px;color:#333;transform:scaleX(0.8923);transform-origin:0 0;">FCL</div>
<div class="t" style="left:490.47px;top:731px;font-size:10.9px;color:#333;transform:scaleX(0.9756);transform-origin:0 0;">Export</div>
<div class="t" style="left:704.71px;top:731px;font-size:10.9px;color:#333;transform:scaleX(0.9150);transform-origin:0 0;">HOUSTON, TX, US (USHOU)</div>
<div class="t" style="left:944.31px;top:731px;font-size:10.9px;color:#333;transform:scaleX(0.9178);transform-origin:0 0;">HOUSTON, TX, US (USHOU)</div>
<div class="t" style="left:1093.27px;top:731px;font-size:10.9px;color:#333;transform:scaleX(0.9740);transform-origin:0 0;">Pending</div>
<div style="position:absolute;left:266px;top:751.5px;width:882.5px;height:1.2px;background:#eff0f3"></div>
<div class="t" style="left:277.13px;top:764px;font-size:10.9px;color:#333;transform:scaleX(0.8923);transform-origin:0 0;">FCL</div>
<div class="t" style="left:490.47px;top:764px;font-size:10.9px;color:#333;transform:scaleX(0.9756);transform-origin:0 0;">Export</div>
<div class="t" style="left:704.71px;top:764px;font-size:10.9px;color:#333;transform:scaleX(0.9150);transform-origin:0 0;">HOUSTON, TX, US (USHOU)</div>
<div class="t" style="left:944.31px;top:764px;font-size:10.9px;color:#333;transform:scaleX(0.9178);transform-origin:0 0;">HOUSTON, TX, US (USHOU)</div>
<div class="t" style="left:1093.27px;top:764px;font-size:10.9px;color:#333;transform:scaleX(0.9740);transform-origin:0 0;">Pending</div>
<div style="position:absolute;left:266px;top:784.35px;width:882.5px;height:1.2px;background:#eff0f3"></div>
<div class="t" style="left:1057.36px;top:800px;font-size:12.4px;color:#222;font-weight:bold;transform:scaleX(0.9509);transform-origin:0 0;">See more</div>
<svg style="position:absolute;left:0px;top:0px;" width="1200" height="842" viewBox="0 0 1200 842" fill="none"><path d="M506.6 527.4 L511.5 531.5 L516.4 527.4" stroke="#222" stroke-width="1.5" stroke-linecap="round" stroke-linejoin="round"/><path d="M667.3 527.4 L672.2 531.5 L677.1 527.4" stroke="#222" stroke-width="1.5" stroke-linecap="round" stroke-linejoin="round"/><path d="M887.2 604.20 H894.5" stroke="#45485e" stroke-width="1.25" stroke-linecap="round"/><path d="M893.1 601.30 L896 604.20 L893.1 607.10" stroke="#26284a" stroke-width="1.4" stroke-linecap="round" stroke-linejoin="round"/><path d="M887.2 637.05 H894.5" stroke="#45485e" stroke-width="1.25" stroke-linecap="round"/><path d="M893.1 634.15 L896 637.05 L893.1 639.95" stroke="#26284a" stroke-width="1.4" stroke-linecap="round" stroke-linejoin="round"/><path d="M887.2 669.90 H894.5" stroke="#45485e" stroke-width="1.25" stroke-linecap="round"/><path d="M893.1 667.00 L896 669.90 L893.1 672.80" stroke="#26284a" stroke-width="1.4" stroke-linecap="round" stroke-linejoin="round"/><path d="M887.2 702.75 H894.5" stroke="#45485e" stroke-width="1.25" stroke-linecap="round"/><path d="M893.1 699.85 L896 702.75 L893.1 705.65" stroke="#26284a" stroke-width="1.4" stroke-linecap="round" stroke-linejoin="round"/><path d="M887.2 735.60 H894.5" stroke="#45485e" stroke-width="1.25" stroke-linecap="round"/><path d="M893.1 732.70 L896 735.60 L893.1 738.50" stroke="#26284a" stroke-width="1.4" stroke-linecap="round" stroke-linejoin="round"/><path d="M887.2 768.45 H894.5" stroke="#45485e" stroke-width="1.25" stroke-linecap="round"/><path d="M893.1 765.55 L896 768.45 L893.1 771.35" stroke="#26284a" stroke-width="1.4" stroke-linecap="round" stroke-linejoin="round"/><path d="M1121.9 803.4 L1126.7 807.9 L1131.5 803.4" stroke="#222" stroke-width="1.75" stroke-linecap="round" stroke-linejoin="round"/></svg>
</body></html>
